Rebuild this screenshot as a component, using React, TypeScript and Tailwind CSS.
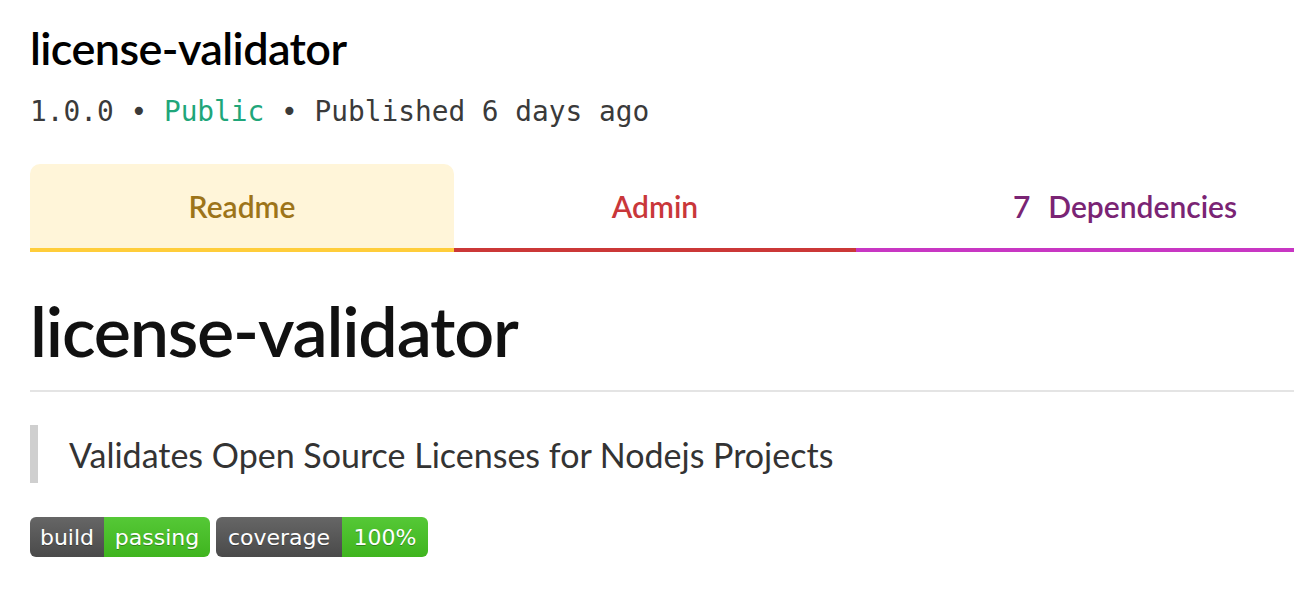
import React from "react";

const sans = { fontFamily: "Lato, 'Noto Sans', sans-serif" };

function Badge({ left, right, lw, rw }: { left: string; right: string; lw: number; rw: number }) {
  return (
    <div
      className="flex h-[40px] overflow-hidden rounded-[6px] text-[22px] text-white"
      style={{ fontFamily: "'DejaVu Sans', Verdana, sans-serif" }}
    >
      <div
        className="flex items-center justify-center bg-gradient-to-b from-[#666] to-[#4a4a4a] [text-shadow:0_1px_0_rgba(0,0,0,0.3)]"
        style={{ width: lw }}
      >
        {left}
      </div>
      <div
        className="flex items-center justify-center bg-gradient-to-b from-[#55c836] to-[#3fb41e] [text-shadow:0_1px_0_rgba(0,0,0,0.3)]"
        style={{ width: rw }}
      >
        {right}
      </div>
    </div>
  );
}

export default function App() {
  return (
    <div className="w-full h-[590px] overflow-hidden bg-white text-[#111]" style={sans}>
      <div className="pl-[30px]">
        <div className="mt-[20px] h-[56px] text-[45px] leading-[56px] font-semibold tracking-[-0.6px] text-black">
          license-validator
        </div>
        <div
          className="mt-[18px] h-[36px] text-[27.8px] leading-[36px] text-[#3a3a3a]"
          style={{ fontFamily: "'DejaVu Sans Mono', 'Liberation Mono', monospace" }}
        >
          1.0.0 • <span className="text-[#1fa67a]">Public</span> • Published 6 days ago
        </div>
        <div className="mt-[34px] flex h-[88px] w-[1364px] text-[30px] font-semibold">
          <div className="flex w-[424px] shrink-0 items-center justify-center rounded-t-[10px] border-b-4 border-[#ffcd3a] bg-[#fff5d9] text-[#9d7419]">
            Readme
          </div>
          <div className="flex w-[402px] shrink-0 items-center justify-center border-b-4 border-[#cb3837] text-[#c9373a]">
            Admin
          </div>
          <div className="flex w-[538px] shrink-0 items-center justify-center border-b-4 border-[#c836c3] text-[#7a2474]">
            <span className="mr-[18px]">7</span>Dependencies
          </div>
        </div>
        <div className="mt-[38px] h-[80px] text-[70px] leading-[80px] font-semibold tracking-[-1.2px] text-[#111]">
          license-validator
        </div>
        <div className="mt-[20px] w-[1300px] border-t-2 border-[#e4e4e4]"></div>
        <div className="mt-[33px] flex h-[58px] items-center border-l-[8px] border-[#cfcfcf] pl-[31px] text-[34px] text-[#333]">
          Validates Open Source Licenses for Nodejs Projects
        </div>
        <div className="mt-[34px] flex gap-[6px]">
          <Badge left="build" right="passing" lw={74} rw={106} />
          <Badge left="coverage" right="100%" lw={126} rw={86} />
        </div>
      </div>
    </div>
  );
}
